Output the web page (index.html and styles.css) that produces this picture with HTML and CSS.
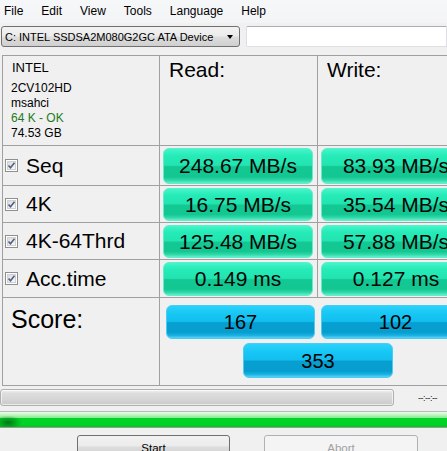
FILE: index.html
```html
<!DOCTYPE html>
<html>
<head>
<meta charset="utf-8">
<link rel="stylesheet" href="styles.css">
</head>
<body>
<div class="menubar">
  <span>File</span><span>Edit</span><span>View</span><span>Tools</span><span>Language</span><span>Help</span>
</div>
<div class="toolbar">
  <div class="combo"><span class="combo-text">C: INTEL SSDSA2M080G2GC ATA Device</span><span class="arrow"></span></div>
  <div class="textbox"></div>
</div>
<div class="grid">
  <div class="cell info">
    <div class="brand">INTEL</div>
    <div>2CV102HD</div>
    <div>msahci</div>
    <div class="ok">64 K - OK</div>
    <div>74.53 GB</div>
  </div>
  <div class="cell head">Read:</div>
  <div class="cell head">Write:</div>

  <div class="cell label"><svg class="chk" width="13" height="13" viewBox="0 0 13 13"><defs><linearGradient id="cg" x1="0" y1="0" x2="1" y2="1"><stop offset="0" stop-color="#d8d8d8"/><stop offset="1" stop-color="#fbfbfb"/></linearGradient></defs><rect x="0.5" y="0.5" width="12" height="12" fill="#fff" stroke="#8e8f8f"/><rect x="2.5" y="2.5" width="8" height="8" fill="url(#cg)" stroke="#d0d0d0"/><path d="M3.5 6.5 L5.5 8.8 L9.5 3.8" fill="none" stroke="#4d6185" stroke-width="1.6"/></svg>Seq</div>
  <div class="cell val"><div class="gbox">248.67 MB/s</div></div>
  <div class="cell val"><div class="gbox">83.93 MB/s</div></div>

  <div class="cell label"><svg class="chk" width="13" height="13" viewBox="0 0 13 13"><rect x="0.5" y="0.5" width="12" height="12" fill="#fff" stroke="#8e8f8f"/><rect x="2.5" y="2.5" width="8" height="8" fill="url(#cg)" stroke="#d0d0d0"/><path d="M3.5 6.5 L5.5 8.8 L9.5 3.8" fill="none" stroke="#4d6185" stroke-width="1.6"/></svg>4K</div>
  <div class="cell val"><div class="gbox">16.75 MB/s</div></div>
  <div class="cell val"><div class="gbox">35.54 MB/s</div></div>

  <div class="cell label"><svg class="chk" width="13" height="13" viewBox="0 0 13 13"><rect x="0.5" y="0.5" width="12" height="12" fill="#fff" stroke="#8e8f8f"/><rect x="2.5" y="2.5" width="8" height="8" fill="url(#cg)" stroke="#d0d0d0"/><path d="M3.5 6.5 L5.5 8.8 L9.5 3.8" fill="none" stroke="#4d6185" stroke-width="1.6"/></svg>4K-64Thrd</div>
  <div class="cell val"><div class="gbox">125.48 MB/s</div></div>
  <div class="cell val"><div class="gbox">57.88 MB/s</div></div>

  <div class="cell label"><svg class="chk" width="13" height="13" viewBox="0 0 13 13"><rect x="0.5" y="0.5" width="12" height="12" fill="#fff" stroke="#8e8f8f"/><rect x="2.5" y="2.5" width="8" height="8" fill="url(#cg)" stroke="#d0d0d0"/><path d="M3.5 6.5 L5.5 8.8 L9.5 3.8" fill="none" stroke="#4d6185" stroke-width="1.6"/></svg>Acc.time</div>
  <div class="cell val"><div class="gbox">0.149 ms</div></div>
  <div class="cell val"><div class="gbox">0.127 ms</div></div>

  <div class="cell score-label">Score:</div>
  <div class="cell score">
    <div class="bbox">167</div>
    <div class="bbox">102</div>
    <div class="bbox total">353</div>
  </div>
</div>
<div class="status">
  <div class="progress"></div>
  <span class="time">--:--:--</span>
</div>
<div class="greenbar"></div>
<div class="buttons">
  <div class="btn">Start</div>
  <div class="btn disabled">Abort</div>
</div>
</body>
</html>
```
FILE: styles.css
```css
html, body {
  margin: 0;
  padding: 0;
}
body {
  width: 447px;
  height: 451px;
  overflow: hidden;
  background: #f0f0f0;
  font-family: "Liberation Sans", Arial, sans-serif;
  color: #000;
}
.menubar {
  height: 23px;
  background: linear-gradient(#f6f7f9, #f3f4f6);
  display: flex;
  gap: 18px;
  padding-left: 4px;
  font-size: 12px;
  line-height: 15px;
  box-sizing: border-box;
  padding-top: 4px;
  white-space: nowrap;
}
.toolbar {
  display: flex;
  padding-top: 3px;
  height: 21px;
}
.combo {
  margin-left: 1px;
  width: 239px;
  height: 21px;
  box-sizing: border-box;
  border: 1px solid #707070;
  border-radius: 3px;
  background: linear-gradient(#f2f2f2 0%, #ebebeb 48%, #dddddd 52%, #cfcfcf 100%);
  display: flex;
  align-items: center;
  justify-content: space-between;
  padding: 0 5px 0 3px;
  font-size: 11px;
  white-space: nowrap;
}
.arrow {
  width: 0;
  height: 0;
  border-left: 3.5px solid transparent;
  border-right: 3.5px solid transparent;
  border-top: 4px solid #000;
  margin-right: 1px;
}
.textbox {
  margin-left: 6px;
  flex: 1;
  height: 21px;
  box-sizing: border-box;
  background: #fff;
  border: 1px solid #dcdfe3;
  border-top-color: #abadb3;
  border-radius: 2px 0 0 2px;
}
.grid {
  margin-top: 8px;
  margin-left: 2px;
  display: grid;
  width: max-content;
  grid-template-columns: 156px 157px 157px;
  grid-template-rows: 89px 39px 36px 36px 37px 87px;
  gap: 1px;
  padding: 1px;
  background: #a0a0a0;
}
.cell {
  background: #f0f0f0;
  min-width: 0;
}
.info {
  padding: 4px 0 0 8px;
  font-size: 12px;
  line-height: 15px;
}
.info .brand {
  font-size: 13px;
  line-height: 16px;
  margin-bottom: 5px;
  padding-left: 1px;
}
.info .ok {
  color: #1f7a1f;
}
.head {
  font-size: 21px;
  line-height: 24px;
  padding: 2px 0 0 9px;
}
.label {
  display: flex;
  align-items: center;
  font-size: 21px;
  padding-left: 2px;
  white-space: nowrap;
}
.chk {
  margin-right: 8px;
  flex: none;
}
.val {
  padding: 2px 4px 1px 3px;
  display: flex;
}
.gbox {
  flex: 1;
  display: flex;
  align-items: center;
  justify-content: center;
  font-size: 21px;
  color: #050505;
  border-radius: 6px;
  border: 1px solid #5eeecb;
  background: linear-gradient(#43f5cb 0%, #26ebb7 20%, #22e4b1 48%, #13c893 52%, #13c792 82%, #2fd9a8 92%, #66eccb 100%);
  white-space: nowrap;
}
.score-label {
  font-size: 25px;
  line-height: 29px;
  padding: 7px 0 0 8px;
}
.score {
  grid-column: 2 / span 2;
  display: grid;
  grid-template-columns: 149px 149px;
  grid-auto-rows: 34px;
  column-gap: 6px;
  row-gap: 4px;
  padding: 7px 0 0 6px;
  align-content: start;
}
.bbox {
  display: flex;
  align-items: center;
  justify-content: center;
  font-size: 20px;
  border-radius: 6px;
  border: 1px solid #49cdf4;
  background: linear-gradient(#2ad2fb 0%, #17c6f4 25%, #12bfee 48%, #079fd1 52%, #079dcf 82%, #18b2e2 92%, #5ad2f5 100%);
  padding-top: 1px;
  box-sizing: border-box;
}
.bbox.total {
  grid-column: 1 / span 2;
  justify-self: center;
  width: 150px;
  height: 35px;
}
.status {
  display: flex;
  align-items: center;
  margin-top: 3px;
  height: 17px;
}
.progress {
  width: 394px;
  height: 17px;
  box-sizing: border-box;
  border: 1px solid #b0b0b0;
  border-radius: 3px;
  background: linear-gradient(#f4f4f4 0%, #dedede 20%, #d6d6d6 60%, #cacaca 100%);
  box-shadow: inset 0 0 0 1px rgba(255,255,255,0.6);
}
.time {
  margin-left: 24px;
  font-size: 9px;
  letter-spacing: -0.5px;
  color: #222;
}
.greenbar {
  margin-top: 5px;
  height: 17px;
  box-sizing: border-box;
  border-top: 1px solid #b8b8b8;
  border-bottom: 1px solid #9a9a9a;
  background:
    radial-gradient(ellipse 14px 7px at 8px 70%, rgba(0,70,10,0.65), rgba(0,70,10,0) 100%),
    linear-gradient(#eefcee 0%, #bff5c0 20%, #88ec8e 38%, #05d32a 42%, #00d424 80%, #02c51f 100%);
}
.buttons {
  display: flex;
  margin-top: 7px;
  padding-left: 77px;
  gap: 34px;
}
.btn {
  width: 153px;
  height: 23px;
  box-sizing: border-box;
  border: 1px solid #707070;
  border-radius: 3px;
  background: linear-gradient(#f2f2f2 0%, #ebebeb 48%, #dddddd 52%, #cfcfcf 100%);
  font-size: 11.5px;
  text-align: center;
  line-height: 21px;
  padding-top: 2px;
}
.btn.disabled {
  width: 154px;
  border-color: #adb2b5;
  background: #f4f4f4;
  color: #a0a0a0;
}
```
